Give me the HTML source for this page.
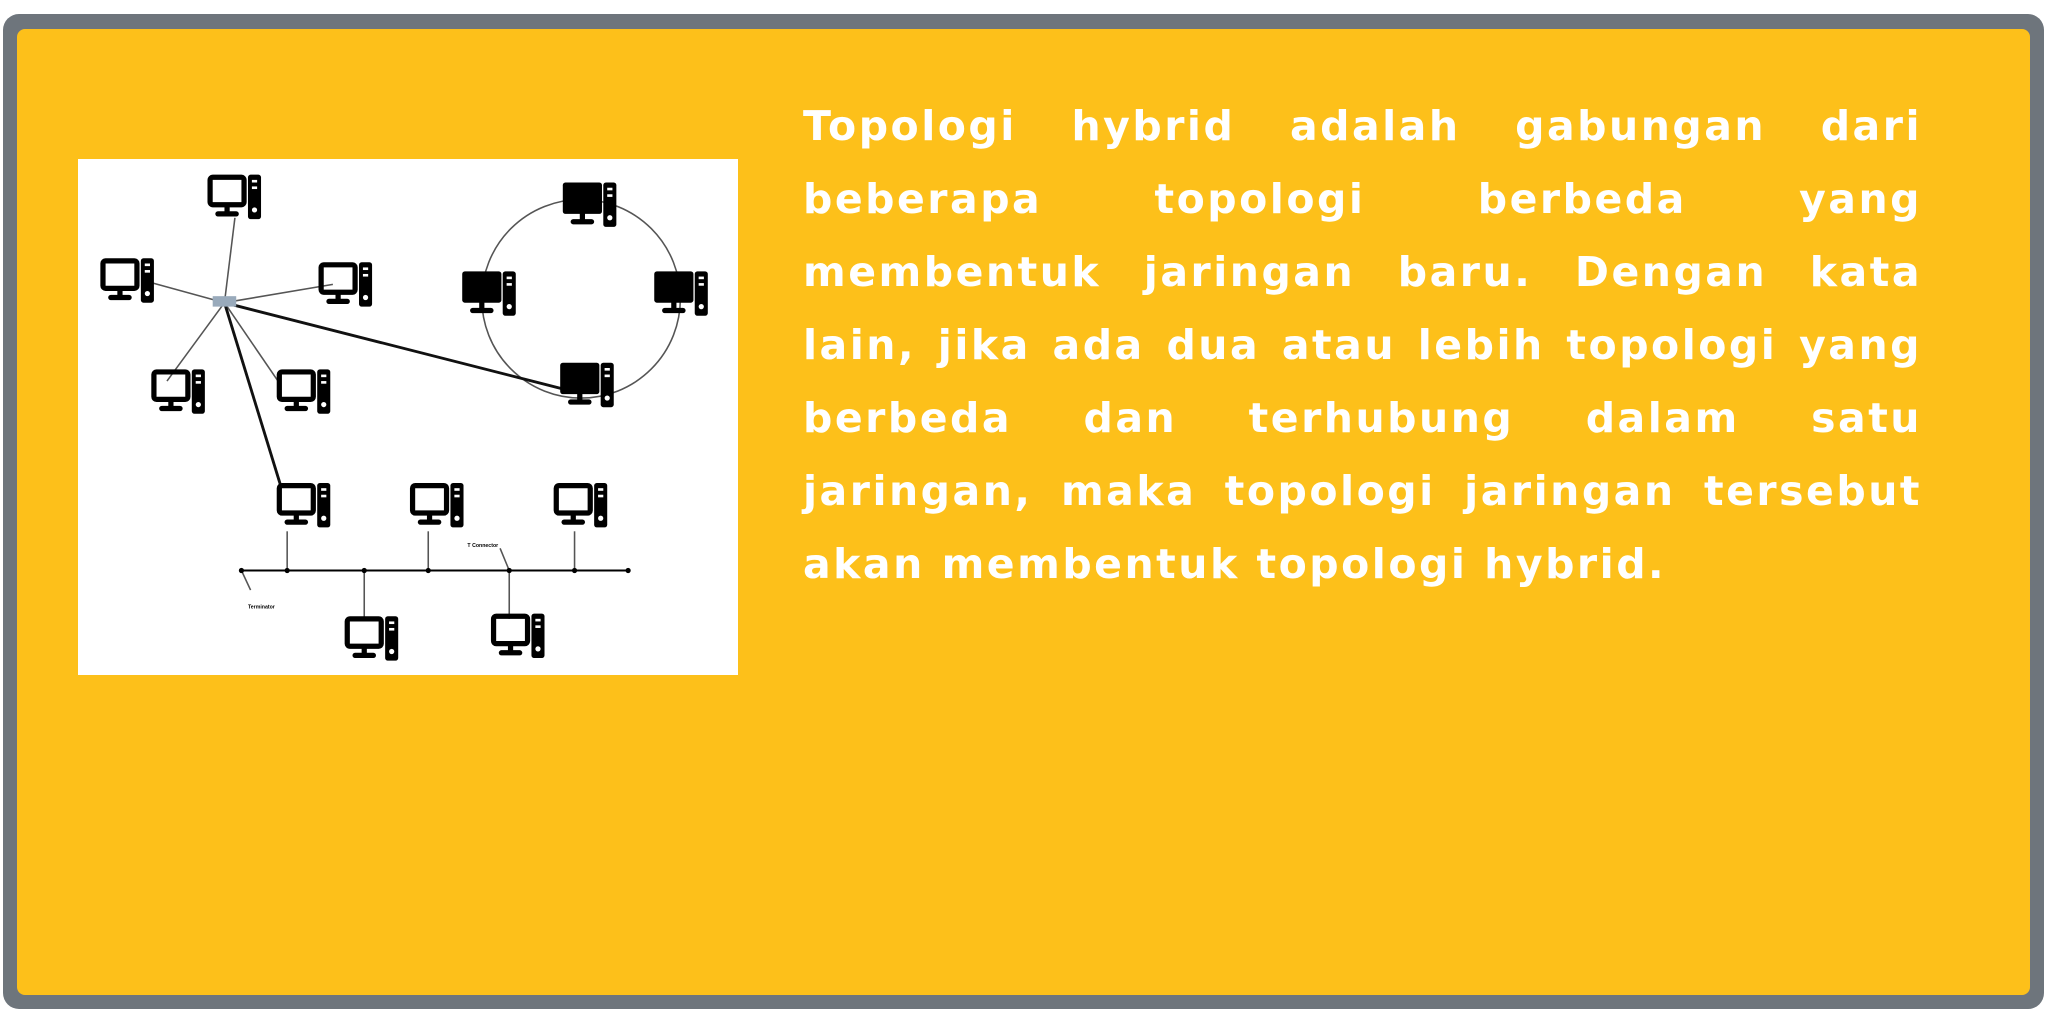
<!DOCTYPE html>
<html><head><meta charset="utf-8"><style>
html,body{margin:0;padding:0;width:2047px;height:1009px;overflow:hidden;background:#fff}
.outer{position:absolute;left:3px;top:14px;width:2041px;height:995px;background:#6e757c;border-radius:16px}
.inner{position:absolute;left:17px;top:29px;width:2013px;height:966px;background:#fdc01a;border-radius:8px}
.img{position:absolute;left:78px;top:159px;width:660px;height:516px;background:#fff}
.txt{position:absolute;left:803px;top:90px;width:1119px;color:#fff;font-family:"DejaVu Sans",sans-serif;font-weight:bold;font-size:41px;letter-spacing:2.5px;line-height:73px}
.txt div{text-align:justify;text-align-last:justify;white-space:nowrap}
.txt div.l{text-align-last:left}
</style></head><body>
<div class="outer"></div><div class="inner"></div>
<div class="img">
<svg width="660" height="516" viewBox="0 0 505 395">
<defs>
<g id="pc"><rect x="-19" y="-16" width="26" height="21" rx="2" fill="none" stroke="#000" stroke-width="4"/><rect x="-8" y="5" width="4" height="6"/><rect x="-15" y="10" width="18" height="4" rx="2"/><rect x="10" y="-18" width="10" height="34" rx="2"/><rect x="13" y="-14" width="4" height="2" fill="#fff"/><rect x="13" y="-9" width="4" height="2" fill="#fff"/><circle cx="15" cy="9" r="2" fill="#fff"/></g>
<g id="pcf"><rect x="-21" y="-18" width="30" height="24" rx="2"/><rect x="-8" y="5" width="4" height="6"/><rect x="-15" y="10" width="18" height="4" rx="2"/><rect x="10" y="-18" width="10" height="34" rx="2"/><rect x="13" y="-14" width="4" height="2" fill="#fff"/><rect x="13" y="-9" width="4" height="2" fill="#fff"/><circle cx="15" cy="9" r="2" fill="#fff"/></g>
</defs>
<g stroke="#555" stroke-width="1.2" fill="none">
<line x1="112" y1="110" x2="120" y2="45"/><line x1="112" y1="110" x2="50" y2="93"/><line x1="112" y1="110" x2="195" y2="96"/><line x1="112" y1="110" x2="68" y2="170"/><line x1="112" y1="110" x2="153" y2="170"/>
<circle cx="385" cy="107" r="76"/>
<line x1="125" y1="315" x2="421" y2="315" stroke="#000" stroke-width="1.5"/>
<line x1="160" y1="285" x2="160" y2="315"/><line x1="268" y1="285" x2="268" y2="315"/><line x1="380" y1="285" x2="380" y2="315"/><line x1="219" y1="315" x2="219" y2="352"/><line x1="330" y1="315" x2="330" y2="352"/>
<line x1="125" y1="315" x2="132" y2="330"/><line x1="330" y1="315" x2="323" y2="298"/>
</g>
<line x1="112" y1="110" x2="155" y2="250" stroke="#111" stroke-width="2.2"/>
<line x1="112" y1="110" x2="375" y2="177" stroke="#111" stroke-width="2.2"/>
<g fill="#000"><circle cx="125" cy="315" r="2"/><circle cx="160" cy="315" r="2"/><circle cx="219" cy="315" r="2"/><circle cx="268" cy="315" r="2"/><circle cx="330" cy="315" r="2"/><circle cx="380" cy="315" r="2"/><circle cx="421" cy="315" r="2"/></g>
<rect x="103" y="105" width="18" height="8" fill="#9ab" />
<g fill="#000">
<use href="#pc" x="120" y="30"/><use href="#pc" x="38" y="94"/><use href="#pc" x="205" y="97"/><use href="#pc" x="77" y="179"/><use href="#pc" x="173" y="179"/>
<use href="#pc" x="173" y="266"/><use href="#pc" x="275" y="266"/><use href="#pc" x="385" y="266"/><use href="#pc" x="225" y="368"/><use href="#pc" x="337" y="366"/>
<use href="#pcf" x="392" y="36"/><use href="#pcf" x="315" y="104"/><use href="#pcf" x="462" y="104"/><use href="#pcf" x="390" y="174"/>
</g>
<text x="130" y="344" font-family="Liberation Sans" font-size="4" font-weight="bold">Terminator</text>
<text x="298" y="297" font-family="Liberation Sans" font-size="4" font-weight="bold">T Connector</text>
</svg>
</div>
<div class="txt">
<div>Topologi hybrid adalah gabungan dari</div>
<div>beberapa topologi berbeda yang</div>
<div>membentuk jaringan baru. Dengan kata</div>
<div>lain, jika ada dua atau lebih topologi yang</div>
<div>berbeda dan terhubung dalam satu</div>
<div>jaringan, maka topologi jaringan tersebut</div>
<div class="l">akan membentuk topologi hybrid.</div>
</div>
</body></html>
